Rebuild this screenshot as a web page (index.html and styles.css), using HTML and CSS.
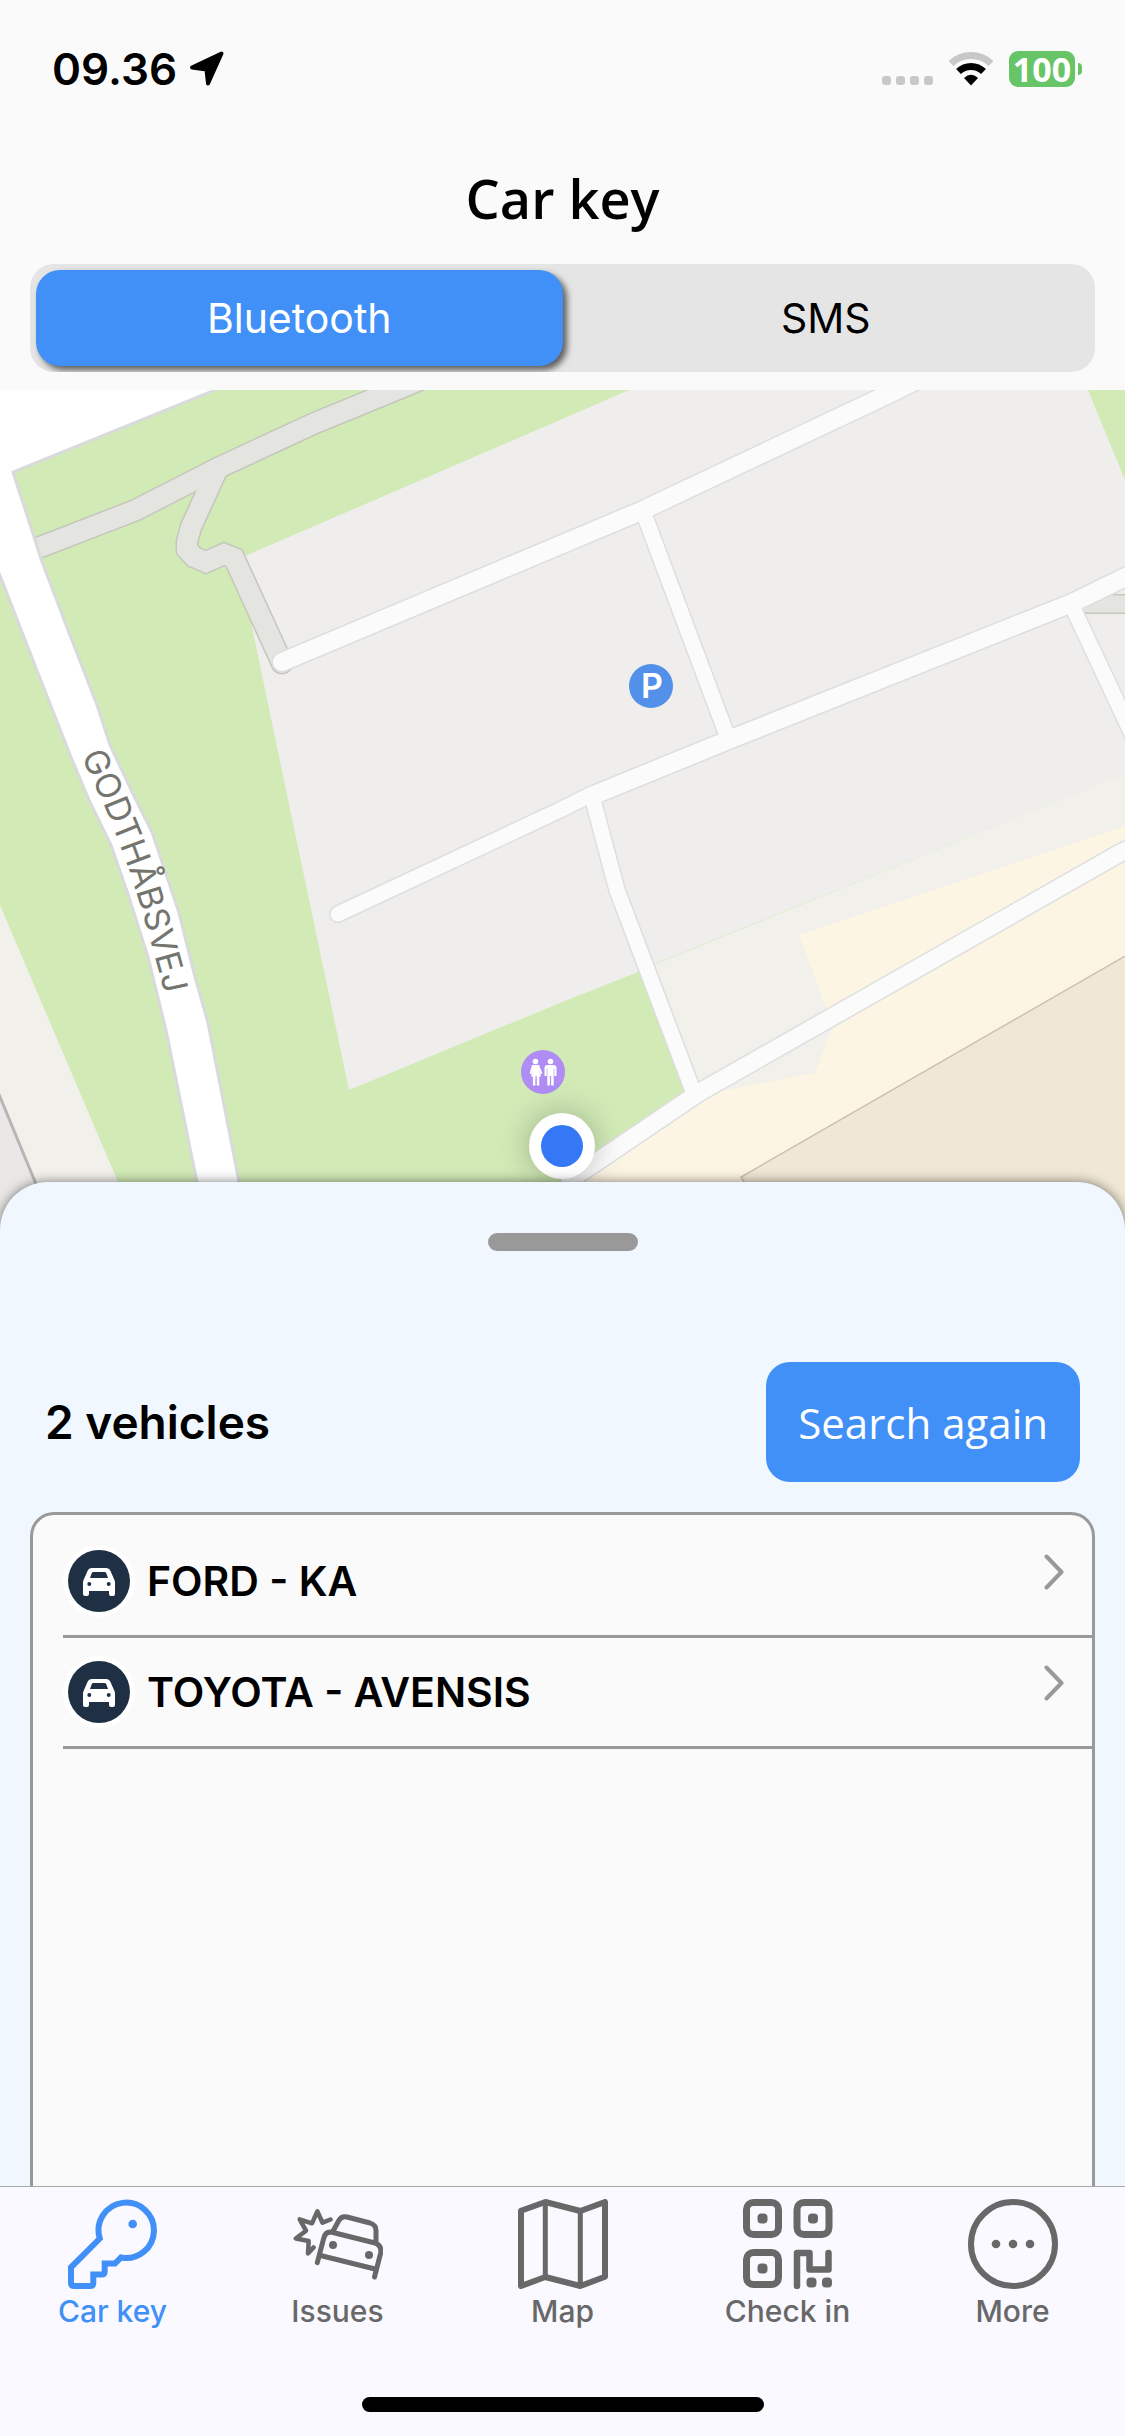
FILE: index.html
```
<!DOCTYPE html>
<html lang="en">
<head>
  <meta charset="UTF-8">
  <meta name="viewport" content="width=device-width, initial-scale=1.0">
  <title>Car key</title>
  <link rel="stylesheet" href="styles.css">
</head>
<body>
  <header class="header">
    <div class="status-bar">
      <div class="status-left">
        <span class="time">09.36</span>
        <svg width="36" height="36" viewBox="0 0 36 36">
          <path d="M32.500 2.500 L3 16.500 L17.500 18.500 L19 32.500 Z" fill="#000" stroke="#000" stroke-width="4" stroke-linejoin="round"/>
        </svg>
      </div>
      <div class="status-right">
        <svg class="signal" width="51" height="36" viewBox="0 0 51 36">
          <g fill="#c8c8c8">
            <rect x="0" y="25" width="9" height="9" rx="3"/>
            <rect x="14" y="25" width="9" height="9" rx="3"/>
            <rect x="28" y="25" width="9" height="9" rx="3"/>
            <rect x="42" y="25" width="9" height="9" rx="3"/>
          </g>
        </svg>
        <svg class="wifi" width="46" height="36" viewBox="0 0 46 36">
          <path d="M3 12.500 A29 29 0 0 1 43 12.500" fill="none" stroke="#c8c8c8" stroke-width="7"/>
          <path d="M10.500 20.500 A18 18 0 0 1 35.500 20.500" fill="none" stroke="#000" stroke-width="7"/>
          <path d="M16 27 Q23 20.500 30 27 L23 34.500 Z" fill="#000"/>
        </svg>
        <div class="battery">100</div>
        <div class="battery-tip"></div>
      </div>
    </div>
    <h1 class="title">Car key</h1>
    <div class="segment">
      <button type="button" class="segment-btn active" aria-pressed="true">Bluetooth</button>
      <button type="button" class="segment-btn" aria-pressed="false">SMS</button>
    </div>
  </header>

  <main class="content">
    <svg class="map" viewBox="0 390 1125 840">
      <rect x="0" y="390" width="1125" height="840" fill="#d1eab6"/>

      <!-- land -->
      <path d="M0 905 L118 1182 L140 1230 H0 Z" fill="#f2f0eb"/>
      <path d="M0 1097 L55 1230 H0 Z" fill="#e9e8e7"/>
      <path d="M-2 1092 L55 1230" stroke="#b6b6b5" stroke-width="3"/>
      <path d="M641 970 L1083 790 L1125 773 V1230 H560 L570 1178 L700 1090 Z" fill="#f1f0eb"/>
      <path d="M245 556 L560 420 L629 390 H1088 L1125 480 V773 L1083 790 L657 963 L638 972 L560 1003 L349 1090 L286 790 L252 627 Z" fill="#efeeec"/>
      <path d="M1125 826 L799 935 L826 1007 L832 1028 L815 1073 L726 1090 L700 1092 L570 1180 V1230 H1125 Z" fill="#fdf5e3"/>
      <path d="M1127 955 L741 1177 L775 1232 H1127 Z" fill="#f0e8d4" stroke="#cdc2b0" stroke-width="1.500"/>

      <!-- footpaths -->
      <g fill="none" stroke="#c6c6bd" stroke-width="23">
        <path d="M30 551 L136 510 L218 468 L315 423 L420 380"/>
        <path d="M218 468 L191 527 L187 542 V549 L194 557 L206 562 L224 554 L234 558 L282 663" stroke-linecap="round"/>
        <path d="M1070 604 H1130" stroke-width="20"/>
      </g>
      <g fill="none" stroke="#e4e5e0" stroke-width="20">
        <path d="M30 551 L136 510 L218 468 L315 423 L420 380"/>
        <path d="M218 468 L191 527 L187 542 V549 L194 557 L206 562 L224 554 L234 558 L282 663" stroke-linecap="round"/>
        <path d="M1070 604 H1130" stroke-width="17"/>
      </g>

      <!-- Godthåbsvej -->
      <path d="M220 388 L13 472 L34 537 L41 559 L66 625 L97 705 L110 745 L133 794 L152 832 L164 868 L179 913 L195 977 L208 1023 L239 1182 L248 1230 H206 L197 1182 L166 1030 L148 957 L129 897 L111 845 L89 800 L71 757 L36 668 L-4 565 V380 Z" fill="#fff" stroke="#d9dadb" stroke-width="3"/>

      <!-- parking roads -->
      <g fill="none" stroke="#dddfdf" stroke-linecap="round" stroke-linejoin="round">
        <path d="M282 662 L641 511 L897 390 L960 358" stroke-width="21"/>
        <path d="M644 514 L728 738" stroke-width="18"/>
        <path d="M338 914 L560 810 L592 794" stroke-width="18"/>
        <path d="M594 795 L726 741 L1072 603 L1140 570" stroke-width="21"/>
        <path d="M1073 608 L1140 751" stroke-width="18"/>
        <path d="M593 800 L617 890 L692 1088" stroke-width="18"/>
        <path d="M570 1180 L700 1092 L1122 852 L1140 844" stroke-width="20"/>
      </g>
      <g fill="none" stroke="#fbfbfb" stroke-linecap="round" stroke-linejoin="round">
        <path d="M282 662 L641 511 L897 390 L960 358" stroke-width="18"/>
        <path d="M644 514 L728 738" stroke-width="15"/>
        <path d="M338 914 L560 810 L592 794" stroke-width="15"/>
        <path d="M594 795 L726 741 L1072 603 L1140 570" stroke-width="18"/>
        <path d="M1073 608 L1140 751" stroke-width="15"/>
        <path d="M593 800 L617 890 L692 1088" stroke-width="15"/>
        <path d="M570 1180 L700 1092 L1122 852 L1140 844" stroke-width="17"/>
      </g>

      <path id="road-label" d="M81 756 L104 805 L117 837 L130 872 L143 914 L161 979 L172 1030" fill="none"/>
      <text class="road-name"><textPath href="#road-label">GODTHÅBSVEJ</textPath></text>

      <!-- parking pin -->
      <circle cx="651" cy="686" r="22" fill="#5390e9"/>
      <text class="pin-letter" x="652" y="698" text-anchor="middle">P</text>

      <!-- toilets pin -->
      <circle cx="543" cy="1072" r="22" fill="#b08cf5"/>
      <g fill="#fff">
        <circle cx="535.500" cy="1061.500" r="2.800"/>
        <path d="M532 1065 h7 l3.500 8.500 -1.800 .8 -2.400 -5 2.900 7.200 h-1.900 v9 h-2.500 v-9 h-1.400 v9 h-2.500 v-9 h-2 l2.900 -7.200 -2.400 5 -1.800 -.8 Z"/>
        <circle cx="550.500" cy="1061.500" r="2.800"/>
        <path d="M547.500 1065 h6 q3 0 3 3 v8 h-2.200 v-7.500 h-.6 v17 h-2.600 v-9.500 h-1.200 v9.500 h-2.600 v-17 h-.6 v7.500 h-2.200 v-8 q0 -3 3 -3 Z"/>
      </g>

      <!-- own position -->
      <g class="position">
        <circle cx="562" cy="1146" r="33" fill="#fff"/>
      </g>
      <circle cx="562" cy="1146" r="21" fill="#3478f6"/>
    </svg>

    <section class="sheet">
      <div class="handle"></div>
      <div class="sheet-head">
        <h2 class="count">2 vehicles</h2>
        <button type="button" class="search-btn">Search again</button>
      </div>
      <ul class="vehicles">
        <li>
          <a href="#" class="vehicle">
            <svg class="car" width="72" height="72" viewBox="-5 -5 72 72">
              <circle cx="31" cy="31" r="36" fill="#fff"/>
              <circle cx="31" cy="31" r="31" fill="#1f3044"/>
              <path fill="#fff" fill-rule="evenodd" d="M15 44 V32.500 Q15 31 15.800 29.500 L19.500 21 Q20.800 18 24 18 H38 Q41.200 18 42.500 21 L46.200 29.500 Q47 31 47 32.500 V44 Q47 46 45 46 H43 Q41 46 41 44 V41 H21 V44 Q21 46 19 46 H17 Q15 46 15 44 Z M22 28 H40 L38.300 23.300 Q37.900 22 36.500 22 H25.500 Q24.100 22 23.700 23.300 Z M19.300 34 a2 2 0 1 0 4 0 a2 2 0 1 0 -4 0 Z M38.700 34 a2 2 0 1 0 4 0 a2 2 0 1 0 -4 0 Z"/>
            </svg>
            <span class="name">FORD - KA</span>
            <svg class="chevron" width="20" height="36" viewBox="0 0 20 36">
              <path d="M2.500 2.500 L17.500 18 L2.500 33.500" fill="none" stroke="#999" stroke-width="4" stroke-linecap="round" stroke-linejoin="round"/>
            </svg>
          </a>
        </li>
        <li>
          <a href="#" class="vehicle">
            <svg class="car" width="72" height="72" viewBox="-5 -5 72 72">
              <circle cx="31" cy="31" r="36" fill="#fff"/>
              <circle cx="31" cy="31" r="31" fill="#1f3044"/>
              <path fill="#fff" fill-rule="evenodd" d="M15 44 V32.500 Q15 31 15.800 29.500 L19.500 21 Q20.800 18 24 18 H38 Q41.200 18 42.500 21 L46.200 29.500 Q47 31 47 32.500 V44 Q47 46 45 46 H43 Q41 46 41 44 V41 H21 V44 Q21 46 19 46 H17 Q15 46 15 44 Z M22 28 H40 L38.300 23.300 Q37.900 22 36.500 22 H25.500 Q24.100 22 23.700 23.300 Z M19.300 34 a2 2 0 1 0 4 0 a2 2 0 1 0 -4 0 Z M38.700 34 a2 2 0 1 0 4 0 a2 2 0 1 0 -4 0 Z"/>
            </svg>
            <span class="name">TOYOTA - AVENSIS</span>
            <svg class="chevron" width="20" height="36" viewBox="0 0 20 36">
              <path d="M2.500 2.500 L17.500 18 L2.500 33.500" fill="none" stroke="#999" stroke-width="4" stroke-linecap="round" stroke-linejoin="round"/>
            </svg>
          </a>
        </li>
      </ul>
    </section>
  </main>

  <footer class="tab-bar">
    <nav class="tabs">
      <a href="#" class="tab active">
        <svg width="90" height="90" viewBox="0 0 90 90" fill="none" stroke="currentColor" stroke-width="6">
          <path d="M53 58.500 A27.700 27.700 0 1 0 31.800 39.500 L3 68.300 V84 Q3 87 6 87 H22.300 Q25.300 87 25.300 84 V75.500 H33.700 Q36.700 75.500 36.700 72.500 V64.500 H47 Z"/>
          <circle cx="64.700" cy="25" r="4.300" fill="currentColor" stroke="none"/>
        </svg>
        <span>Car key</span>
      </a>
      <a href="#" class="tab">
        <svg width="90" height="90" viewBox="0 0 90 90" fill="none" stroke="currentColor" stroke-width="5" stroke-linecap="round" stroke-linejoin="round">
          <path d="M37.500 20.500 L29.500 23.700 L24.300 12.300 L19 24.300 L6.700 20.300 L13 31.700 L2.800 39.500 L15.700 42 L15 54.500 L20.500 48.500" stroke-width="4.500"/>
          <path d="M39.700 32.700 L45.700 21.700 Q48.500 16.500 54 18 L77 24 Q83 26 83 31.500 V43.700"/>
          <path d="M24.300 63.700 L30.700 39.300 Q32.500 32 39 33.300 L81 43.700 Q89 46 87.700 54 L81.500 78"/>
          <path d="M27.500 56.500 L83 70.300"/>
          <g fill="currentColor" stroke="none">
            <circle cx="40" cy="46" r="4"/>
            <circle cx="76" cy="56" r="4"/>
          </g>
        </svg>
        <span>Issues</span>
      </a>
      <a href="#" class="tab">
        <svg width="90" height="90" viewBox="0 0 90 90" fill="none" stroke="currentColor" stroke-width="6" stroke-linejoin="round">
          <path d="M3 11.700 L27.300 3 L62.300 12 L87 3 V77.700 L62.300 87 L27.300 78 L3 87 Z"/>
          <path d="M27.300 3 V78 M62.300 12 V87" stroke-width="5"/>
        </svg>
        <span>Map</span>
      </a>
      <a href="#" class="tab">
        <svg width="90" height="90" viewBox="0 0 90 90" fill="none" stroke="currentColor" stroke-width="7">
          <rect x="3.500" y="3.500" width="32" height="32" rx="7"/>
          <rect x="54" y="3.500" width="32" height="32" rx="7"/>
          <rect x="3.500" y="53.500" width="32" height="32" rx="7"/>
          <path d="M54 87 V54 H66.500 V70.500 H85.500 V54" stroke-width="6.500" stroke-linecap="round" stroke-linejoin="round"/>
          <g fill="currentColor" stroke="none">
            <rect x="14.500" y="14.500" width="10" height="10" rx="4"/>
            <rect x="65" y="14.500" width="10" height="10" rx="4"/>
            <rect x="14.500" y="64.500" width="10" height="10" rx="4"/>
            <rect x="63.500" y="78.500" width="10" height="10" rx="4"/>
            <rect x="79" y="78.500" width="10" height="10" rx="4"/>
          </g>
        </svg>
        <span>Check in</span>
      </a>
      <a href="#" class="tab">
        <svg width="90" height="90" viewBox="0 0 90 90" fill="currentColor">
          <circle cx="45" cy="45" r="42" fill="none" stroke="currentColor" stroke-width="6"/>
          <circle cx="28" cy="45" r="4.300"/>
          <circle cx="45" cy="45" r="4.300"/>
          <circle cx="62" cy="45" r="4.300"/>
        </svg>
        <span>More</span>
      </a>
    </nav>
    <div class="home-indicator"></div>
  </footer>
</body>
</html>
```
FILE: styles.css
```
* {
  box-sizing: border-box;
}

body {
  margin: 0;
  min-height: 100vh;
  display: flex;
  flex-direction: column;
  background: #fafafa;
  color: #000;
  font-family: Inter, "Liberation Sans", sans-serif;
}

a {
  color: inherit;
  text-decoration: none;
}

svg {
  display: block;
  flex-shrink: 0;
}

button {
  border: 0;
  cursor: pointer;
}

/* Header */
.header {
  padding: 41px 30px 18px;
}

.status-bar {
  display: flex;
  align-items: center;
  justify-content: space-between;
  padding: 0 13px 0 22px;
  height: 56px;
}

.status-left,
.status-right {
  display: flex;
  align-items: center;
}

.status-left {
  gap: 12px;
}

.time {
  font-size: 44px;
  font-weight: 600;
  line-height: 56px;
}

.wifi {
  margin: 0 15px;
}

.battery {
  width: 66px;
  height: 36px;
  border-radius: 9px;
  background: #67c567;
  color: #fff;
  font-family: "Open Sans", sans-serif;
  font-size: 34px;
  font-weight: 700;
  line-height: 36px;
  text-align: center;
}

.battery-tip {
  width: 4px;
  height: 12px;
  margin-left: 3px;
  border-radius: 0 4px 4px 0;
  background: #67c567;
}

.title {
  margin: 64px 0 29px;
  font-family: "Open Sans", sans-serif;
  font-size: 54px;
  font-weight: 600;
  line-height: 74px;
  text-align: center;
}

.segment {
  display: flex;
  padding: 6px;
  border-radius: 24px;
  background: #e5e5e5;
  overflow: hidden;
}

.segment-btn {
  flex: 1;
  height: 96px;
  padding: 0;
  border-radius: 24px;
  background: none;
  color: #000;
  font-family: inherit;
  font-size: 41px;
}

.segment-btn.active {
  background: #4190f7;
  color: #fff;
  box-shadow: 4px 4px 6px rgba(0, 0, 0, 0.6);
}

/* Map */
.content {
  flex: 1;
  display: flex;
  flex-direction: column;
}

.map {
  width: 100%;
  height: auto;
}

.road-name {
  fill: #75756f;
  font-size: 34px;
}

.pin-letter {
  fill: #fff;
  font-size: 34px;
  font-weight: 600;
}

.position {
  filter: drop-shadow(0 0 15px rgba(0, 0, 0, 0.25));
}

/* Bottom sheet */
.sheet {
  position: relative;
  flex: 1;
  display: flex;
  flex-direction: column;
  margin-top: -48px;
  padding: 51px 30px 0;
  border-radius: 48px 48px 0 0;
  background: #f0f7ff;
  box-shadow: 0 0 12px rgba(0, 0, 0, 0.5);
}

.handle {
  width: 150px;
  height: 18px;
  margin: 0 auto;
  border-radius: 9px;
  background: #999;
}

.sheet-head {
  display: flex;
  align-items: center;
  justify-content: space-between;
  margin: 111px 15px 30px;
}

.count {
  margin: 0;
  font-size: 46px;
  font-weight: 600;
  line-height: 58px;
}

.search-btn {
  height: 120px;
  padding: 0 32px;
  border-radius: 24px;
  background: #4190f7;
  color: #fff;
  font-family: "Open Sans", sans-serif;
  font-size: 42px;
}

.vehicles {
  flex: 1;
  margin: 0;
  padding: 12px 0 0 30px;
  border: 3px solid #999;
  border-bottom: 0;
  border-radius: 24px 24px 0 0;
  background: #fafafa;
  list-style: none;
}

.vehicle {
  display: flex;
  align-items: center;
  height: 111px;
  padding-right: 28px;
  border-bottom: 3px solid #999;
}

.name {
  flex: 1;
  margin-left: 12px;
  font-size: 41px;
  font-weight: 600;
}

.chevron {
  margin-bottom: 18px;
}

/* Tab bar */
.tab-bar {
  position: relative;
  padding: 12px 0 24px;
  border-top: 1px solid #a7a7aa;
  background: #f9f9ff;
}

.tabs {
  display: flex;
  margin-bottom: 68px;
}

.tab {
  flex: 1;
  display: flex;
  flex-direction: column;
  align-items: center;
  gap: 4px;
  color: #686868;
  font-size: 30px;
  font-weight: 500;
  line-height: 36px;
}

.tab.active {
  color: #4190f7;
}

.home-indicator {
  width: 402px;
  height: 15px;
  margin: 0 auto;
  border-radius: 8px;
  background: #000;
}
```
